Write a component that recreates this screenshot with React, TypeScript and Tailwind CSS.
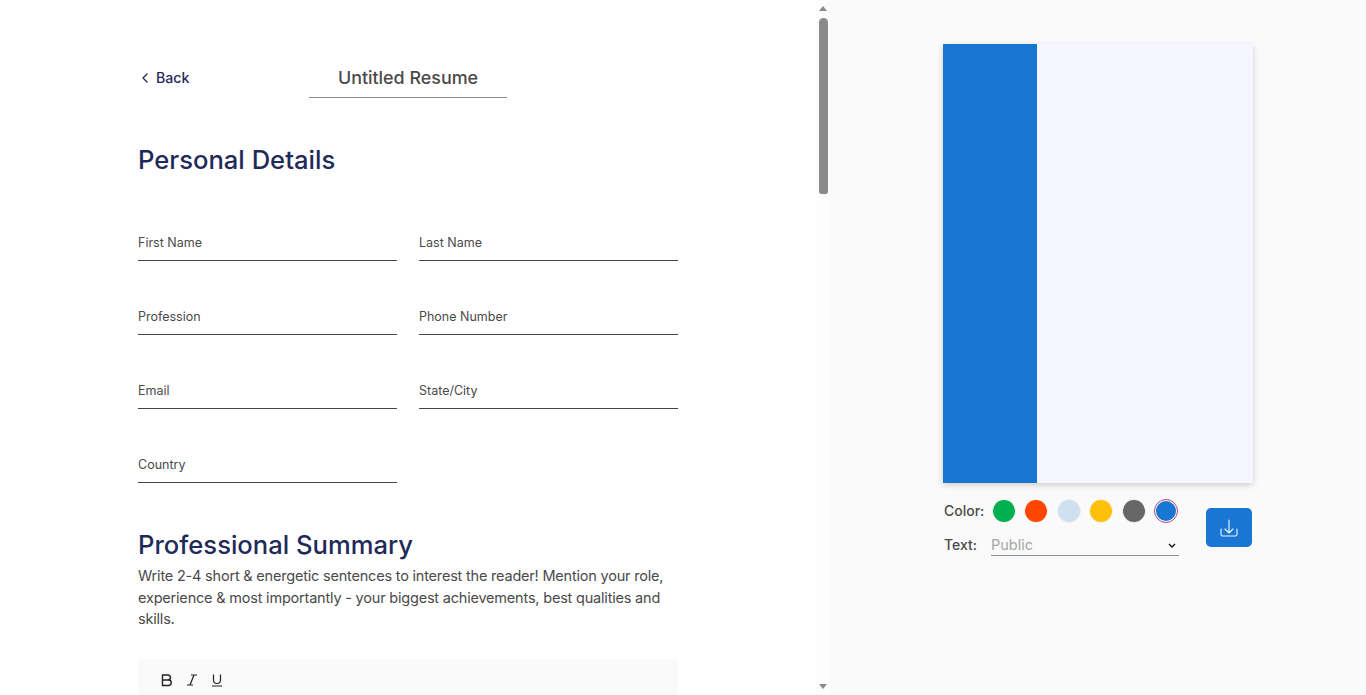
import React from "react";

function Field({ label }: { label: string }) {
  return (
    <div className="h-[38px] flex items-start border-b border-[#444444] text-[12.5px] leading-[18px] text-[#4a4a4a] pt-[11px]">
      {label}
    </div>
  );
}

function Swatch({ color, ring, active }: { color: string; ring: string; active?: boolean }) {
  return (
    <div className={`w-[24px] h-[24px] rounded-full flex items-center justify-center border ${ring}`}>
      <div className={`rounded-full ${active ? "w-[20px] h-[20px]" : "w-[22px] h-[22px]"} ${color}`} />
    </div>
  );
}

export default function App() {
  return (
    <div className="flex h-[695px] w-[1366px] overflow-hidden bg-white font-['Inter',sans-serif]">
      {/* Left editor */}
      <div className="w-[816px] h-[695px] overflow-hidden pl-[138px] pr-[138px] pt-[64px]">
        <div className="flex items-start h-[34px]">
          <button className="flex items-center gap-[5px] h-[28px] w-[171px] pl-[1px] text-[14.2px] font-[450] text-[#1f2a5a]">
            <svg width="12" height="12" viewBox="0 0 12 12" fill="none" stroke="#1f2a5a" strokeWidth="1.3" strokeLinecap="round" strokeLinejoin="round">
              <path d="M8 2 L4 6 L8 10" />
            </svg>
            Back
          </button>
          <div className="w-[198px] h-[34px] border-b border-[#8f8f8f] text-center text-[17.9px] font-[450] leading-[28px] text-[#4a4a4a]">
            Untitled Resume
          </div>
        </div>
        <h1 className="mt-[43px] text-[25.6px] font-[450] leading-[38px] text-[#1f2a5a]">Personal Details</h1>
        <div className="mt-[44px] grid grid-cols-2 gap-x-[22px] gap-y-[36px]">
          <Field label="First Name" />
          <Field label="Last Name" />
          <Field label="Profession" />
          <Field label="Phone Number" />
          <Field label="Email" />
          <Field label="State/City" />
          <Field label="Country" />
        </div>
        <h2 className="mt-[43px] text-[25.6px] font-[450] leading-[38px] text-[#1f2a5a]">Professional Summary</h2>
        <p className="mt-[1px] text-[14.5px] tracking-[-0.2px] leading-[21.5px] text-[#4a4a4a]">
          Write 2-4 short &amp; energetic sentences to interest the reader! Mention your role, experience &amp; most importantly - your biggest achievements, best qualities and skills.
        </p>
        <div className="mt-[29px] h-[60px] bg-[#fafafa] flex items-start gap-[11px] pl-[22px] pt-[14px]">
          <svg width="14" height="14" viewBox="0 0 14 14" fill="none" stroke="#222" strokeWidth="1.4">
            <path d="M2.5 2 H8 a2.5 2.5 0 0 1 0 5 H2.5 Z M2.5 7 H8.5 a2.75 2.75 0 0 1 0 5.5 H2.5 Z" />
          </svg>
          <svg width="14" height="14" viewBox="0 0 14 14" fill="none" stroke="#222" strokeWidth="1.2">
            <path d="M6 2 H12 M2 12 H8 M9 2 L5 12" />
          </svg>
          <svg width="14" height="14" viewBox="0 0 14 14" fill="none" stroke="#222" strokeWidth="1.2">
            <path d="M3.5 1.5 V7 a3.5 3.5 0 0 0 7 0 V1.5 M2 13 H12" />
          </svg>
        </div>
      </div>

      {/* Scrollbar */}
      <div className="w-[14px] h-[695px] bg-[#fdfdfd] flex flex-col items-center justify-between">
        <div className="flex flex-col items-center pt-[6px]">
          <div className="w-0 h-0 border-l-[4.5px] border-r-[4.5px] border-b-[5px] border-l-transparent border-r-transparent border-b-[#8a8a8a]" />
          <div className="mt-[7px] w-[9px] h-[176px] rounded-t-[5px] rounded-b-[3px] bg-[#8a8a8a]" />
        </div>
        <div className="pb-[6px]">
          <div className="w-0 h-0 border-l-[4.5px] border-r-[4.5px] border-t-[5px] border-l-transparent border-r-transparent border-t-[#8a8a8a]" />
        </div>
      </div>

      {/* Right preview */}
      <div className="flex-1 h-[695px] bg-[#fafafa] pl-[113px] pt-[44px]">
        <div className="w-[310px] h-[439px] flex bg-[#f5f6ff] shadow-[0_2px_6px_rgba(0,0,0,0.18)]">
          <div className="w-[94px] h-full bg-[#1976d2]" />
        </div>
        <div className="flex mt-[16px] pl-[1px] w-[309px]">
          <div className="w-[235px]">
            <div className="flex items-center h-[24px]">
              <span className="text-[14px] font-[450] text-[#4a4a4a] w-[47.5px] -translate-y-[1px]">Color:</span>
              <div className="flex gap-[8.5px]">
                <Swatch color="bg-[#00b050]" ring="border-[#eef3ee]" />
                <Swatch color="bg-[#ff4500]" ring="border-[#f5ece8]" />
                <Swatch color="bg-[#d0e0ee]" ring="border-[#e9eef2]" />
                <Swatch color="bg-[#ffc107]" ring="border-[#f3eedf]" />
                <Swatch color="bg-[#666666]" ring="border-[#e8e8e8]" />
                <Swatch color="bg-[#1976d2]" ring="border-[#b04a7e]" active />
              </div>
            </div>
            <div className="flex items-center h-[23px] mt-[10px]">
              <span className="text-[14px] font-[450] text-[#4a4a4a] w-[47px]">Text:</span>
              <div className="w-[188px] h-[23px] border-b border-[#8f8f8f] flex items-center justify-between pr-[3px] pt-[2px]">
                <span className="text-[14.5px] text-[#a6a6a6]">Public</span>
                <svg width="8" height="5" viewBox="0 0 8 5" fill="none" stroke="#222" strokeWidth="1.5">
                  <path d="M1 1 L4 4 L7 1" />
                </svg>
              </div>
            </div>
          </div>
          <button className="ml-[27px] mt-[9px] w-[46px] h-[39px] rounded-[5px] bg-[#1976d2] flex items-center justify-center">
            <svg width="18" height="18" viewBox="0 0 18 18" fill="none" stroke="#f0f6fc" strokeWidth="1.1" strokeLinecap="round" strokeLinejoin="round">
              <path d="M9 1 V14 M5 10 L9 14 L13 10 M1 10 V15.5 Q1 17 2.5 17 H15.5 Q17 17 17 15.5 V10" />
            </svg>
          </button>
        </div>
      </div>
    </div>
  );
}
